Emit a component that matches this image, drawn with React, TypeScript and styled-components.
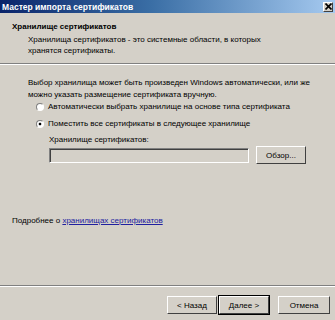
import React from 'react'
import styled, { createGlobalStyle } from 'styled-components'

const GlobalStyle = createGlobalStyle`
  html, body {
    margin: 0;
    padding: 0;
    background: #d4d0c8;
  }
  body {
    font-family: "Liberation Sans", Arial, sans-serif;
    font-size: 8px;
    color: #000;
  }
`

function App() {
  return (
    <Window>
      <GlobalStyle />
      {/* Title bar */}
      <TitleBar>
        <TitleText>Мастер импорта сертификатов</TitleText>
        <CloseButton>
          <svg width="7" height="7" viewBox="0 0 7 7">
            <path d="M0.5 0.5 L6.5 6.5 M6.5 0.5 L0.5 6.5" stroke="#000" strokeWidth="1.6" />
          </svg>
        </CloseButton>
      </TitleBar>
      {/* Header */}
      <Header>
        <HeaderTitle>Хранилище сертификатов</HeaderTitle>
        <HeaderDesc>
          Хранилища сертификатов - это системные области, в которых
          <br />
          хранятся сертификаты.
        </HeaderDesc>
      </Header>
      <Separator />
      {/* Body */}
      <Body>
        <Intro>
          Выбор хранилища может быть произведен Windows автоматически, или же
          <br />
          можно указать размещение сертификата вручную.
        </Intro>
        <RadioRow first>
          <Radio />
          Автоматически выбрать хранилище на основе типа сертификата
        </RadioRow>
        <RadioRow>
          <Radio checked />
          Поместить все сертификаты в следующее хранилище
        </RadioRow>
        <StoreBlock>
          <StoreLabel>Хранилище сертификатов:</StoreLabel>
          <StoreRow>
            <StoreInput />
            <Button>Обзор...</Button>
          </StoreRow>
        </StoreBlock>
      </Body>
      <MoreInfo>
        Подробнее о <Link>хранилищах сертификатов</Link>
      </MoreInfo>
      <Separator />
      <Footer>
        <Button>&lt; Назад</Button>
        <Button isDefault>Далее &gt;</Button>
        <CancelButton>Отмена</CancelButton>
      </Footer>
    </Window>
  )
}

const Window = styled.div`
  width: 335px;
  height: 320px;
  display: flex;
  flex-direction: column;
  overflow: hidden;
  background: #d4d0c8;
`
const TitleBar = styled.div`
  height: 13px;
  display: flex;
  align-items: center;
  justify-content: space-between;
  padding: 0 2px 0 2px;
  background: linear-gradient(to right, #0a246a 0%, #3a6ea5 45%, #a6caf0 100%);
`
const TitleText = styled.span`
  color: #fff;
  font-weight: bold;
  font-size: 8.5px;
`
const CloseButton = styled.div`
  width: 10px;
  height: 10px;
  display: flex;
  align-items: center;
  justify-content: center;
  background: #d4d0c8;
  border: 1px solid;
  border-color: #fff #404040 #404040 #fff;
  box-sizing: border-box;
`
const Header = styled.div`
  padding: 8px 12px 0 12px;
  height: 42px;
`
const HeaderTitle = styled.div`
  font-weight: bold;
  line-height: 11px;
`
const HeaderDesc = styled.div`
  padding-left: 16px;
  margin-top: 2px;
  line-height: 11px;
`
const Separator = styled.div`
  height: 0;
  border-top: 1px solid #808080;
  border-bottom: 1px solid #fff;
`
const Body = styled.div`
  padding: 12px 0 0 28px;
  display: flex;
  flex-direction: column;
`
const Intro = styled.div`
  line-height: 12px;
`
const RadioRow = styled.label<{ first?: boolean }>`
  display: flex;
  align-items: center;
  gap: 4px;
  margin-left: 8px;
  margin-top: ${p => (p.first ? '0' : '5px')};
  height: 12px;
  line-height: 12px;
`
const Radio = styled.span<{ checked?: boolean }>`
  width: 8px;
  height: 8px;
  border-radius: 50%;
  box-sizing: border-box;
  border: 1px solid;
  border-color: #808080 #fff #fff #808080;
  background: ${p => (p.checked ? 'radial-gradient(circle, #000 0 1.5px, #fff 1.6px)' : '#fff')};
`
const StoreBlock = styled.div`
  margin: 4px 0 0 21px;
  display: flex;
  flex-direction: column;
  gap: 1px;
`
const StoreLabel = styled.span`
  line-height: 11px;
`
const StoreRow = styled.div`
  display: flex;
  align-items: center;
  gap: 7px;
`
const StoreInput = styled.div`
  width: 200px;
  height: 15px;
  box-sizing: border-box;
  border: 1px solid;
  border-color: #808080 #fff #fff #808080;
  box-shadow: inset 1px 1px 0 #404040;
  background: #d4d0c8;
`
const Button = styled.div<{ isDefault?: boolean }>`
  width: 50px;
  height: 18px;
  box-sizing: border-box;
  display: flex;
  align-items: center;
  justify-content: center;
  border: 1px solid;
  border-color: #fff #404040 #404040 #fff;
  outline: ${p => (p.isDefault ? '1px solid #000' : 'none')};
  background: #d4d0c8;
`
const CancelButton = styled(Button)`
  margin-left: 7px;
  width: 52px;
`
const MoreInfo = styled.div`
  margin-top: auto;
  padding: 0 0 60px 12px;
`
const Link = styled.span`
  color: #2020a0;
  text-decoration: underline;
`
const Footer = styled.div`
  display: flex;
  justify-content: flex-end;
  gap: 2px;
  padding: 9px 5px 0 0;
  height: 24px;
`

export default App
